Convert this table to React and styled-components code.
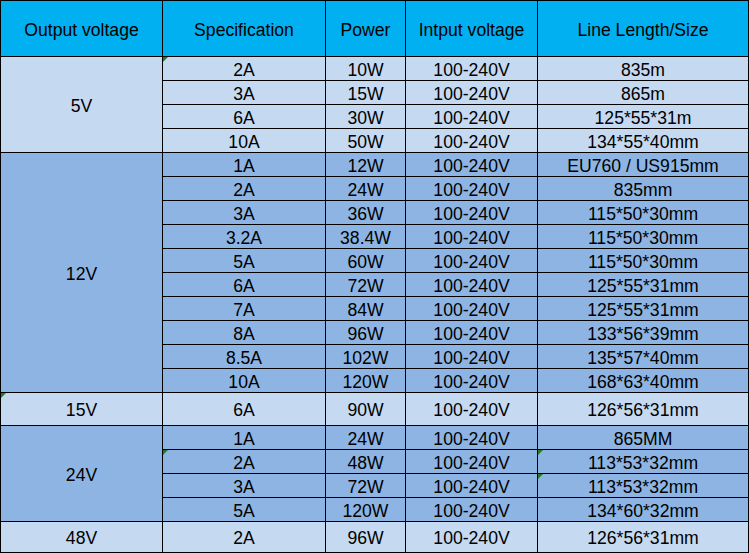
import React from "react";
import styled, { createGlobalStyle } from "styled-components";

const Global = createGlobalStyle`
  html, body { margin: 0; padding: 0; background: #ffffff; }
  #root { width: 749px; }
`;

const Table = styled.div`
  display: grid;
  grid-template-columns: 161px 162px 79px 131px 210px;
  grid-template-rows: ${(p) => p.$rows};
  gap: 1px;
  padding: 1px;
  background: #000;
  width: 749px;
  box-sizing: border-box;
  font-family: "Liberation Sans", Arial, sans-serif;
  font-size: 17.6px;
  color: #000;
`;

const HeadCell = styled.div`
  background: #00b0f0;
  display: flex;
  align-items: center;
  justify-content: center;
  padding-top: 5px;
  white-space: nowrap;
  line-height: 1;
`;

const Cell = styled.div`
  position: relative;
  background: ${(p) => (p.$dark ? "#8db4e2" : "#c5d9f1")};
  display: flex;
  align-items: center;
  justify-content: center;
  white-space: nowrap;
  line-height: 1;
  padding-top: 4px;
  grid-row: ${(p) => (p.$span ? `span ${p.$span}` : "auto")};
  &::before {
    content: "";
    display: ${(p) => (p.$flag ? "block" : "none")};
    position: absolute;
    left: 0;
    top: 0;
    width: 0;
    height: 0;
    border-top: 5px solid #1f7f1f;
    border-right: 5px solid transparent;
  }
`;

const groups = [
  {
    v: "5V",
    dark: false,
    h: 23,
    rows: [
      ["2A", "10W", "100-240V", "835m", [1]],
      ["3A", "15W", "100-240V", "865m"],
      ["6A", "30W", "100-240V", "125*55*31m"],
      ["10A", "50W", "100-240V", "134*55*40mm"],
    ],
  },
  {
    v: "12V",
    dark: true,
    h: 23,
    rows: [
      ["1A", "12W", "100-240V", "EU760 / US915mm"],
      ["2A", "24W", "100-240V", "835mm"],
      ["3A", "36W", "100-240V", "115*50*30mm"],
      ["3.2A", "38.4W", "100-240V", "115*50*30mm"],
      ["5A", "60W", "100-240V", "115*50*30mm"],
      ["6A", "72W", "100-240V", "125*55*31mm"],
      ["7A", "84W", "100-240V", "125*55*31mm"],
      ["8A", "96W", "100-240V", "133*56*39mm"],
      ["8.5A", "102W", "100-240V", "135*57*40mm"],
      ["10A", "120W", "100-240V", "168*63*40mm"],
    ],
  },
  {
    v: "15V",
    dark: false,
    h: 32,
    flag: true,
    rows: [["6A", "90W", "100-240V", "126*56*31mm"]],
  },
  {
    v: "24V",
    dark: true,
    h: 23,
    rows: [
      ["1A", "24W", "100-240V", "865MM"],
      ["2A", "48W", "100-240V", "113*53*32mm", [1, 4]],
      ["3A", "72W", "100-240V", "113*53*32mm", [4]],
      ["5A", "120W", "100-240V", "134*60*32mm"],
    ],
  },
  {
    v: "48V",
    dark: false,
    h: 30,
    rows: [["2A", "96W", "100-240V", "126*56*31mm"]],
  },
];

const headers = [
  "Output voltage",
  "Specification",
  "Power",
  "Intput voltage",
  "Line Length/Size",
];

export default function App() {
  const rowSizes = ["55px"];
  groups.forEach((g) => g.rows.forEach(() => rowSizes.push(`${g.h}px`)));

  return (
    <>
      <Global />
      <Table $rows={rowSizes.join(" ")}>
        {headers.map((h) => (
          <HeadCell key={h}>{h}</HeadCell>
        ))}
        {groups.map((g) =>
          g.rows.map((r, i) => {
            const flags = r[4] || [];
            return (
              <React.Fragment key={g.v + i}>
                {i === 0 && (
                  <Cell $dark={g.dark} $span={g.rows.length} $flag={g.flag}>
                    {g.v}
                  </Cell>
                )}
                {r.slice(0, 4).map((t, c) => (
                  <Cell key={c} $dark={g.dark} $flag={flags.includes(c + 1)}>
                    {t}
                  </Cell>
                ))}
              </React.Fragment>
            );
          })
        )}
      </Table>
    </>
  );
}
